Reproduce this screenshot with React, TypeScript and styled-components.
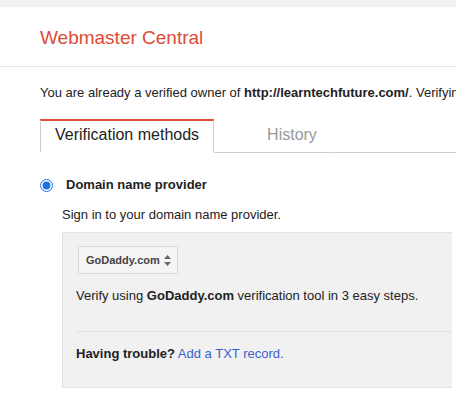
import styled, { createGlobalStyle } from "styled-components";

const GlobalStyle = createGlobalStyle`
  body {
    margin: 0;
    background: #ffffff;
    font-family: "Liberation Sans", Arial, sans-serif;
    color: #222222;
  }
`;

export default function App() {
  return (
    <>
      <GlobalStyle />
      <Page>
        <TopBar />
        <Header>
          <Title>Webmaster Central</Title>
        </Header>
        <Content>
          <Intro>
            You are already a verified owner of <b>http://learntechfuture.com/</b>. Verifying
          </Intro>
          <Tabs>
            <Tab $active>Verification methods</Tab>
            <Tab>History</Tab>
          </Tabs>
          <MethodRow>
            <Radio type="radio" defaultChecked name="method" />
            <MethodLabel>Domain name provider</MethodLabel>
          </MethodRow>
          <Section>
            <Hint>Sign in to your domain name provider.</Hint>
            <Panel>
              <Select>
                GoDaddy.com
                <Arrows viewBox="0 0 7 11" width="7" height="11">
                  <path d="M3.5 0 L7 4 L0 4 Z" fill="#666" />
                  <path d="M0 7 L7 7 L3.5 11 Z" fill="#666" />
                </Arrows>
              </Select>
              <Steps>
                Verify using <b>GoDaddy.com</b> verification tool in 3 easy steps.
              </Steps>
              <Divider />
              <Trouble>
                <b>Having trouble?</b> <Link href="#">Add a TXT record.</Link>
              </Trouble>
            </Panel>
          </Section>
        </Content>
      </Page>
    </>
  );
}

const Page = styled.div`
  width: 456px;
  height: 396px;
  overflow: hidden;
`;

const TopBar = styled.div`
  height: 7px;
  background: #f1f1f1;
`;

const Header = styled.div`
  box-sizing: border-box;
  height: 60px;
  padding: 20px 0 0 40px;
  border-bottom: 1px solid #e5e5e5;
`;

const Title = styled.h1`
  margin: 0;
  font-size: 19px;
  line-height: 22px;
  font-weight: normal;
  color: #dd4b39;
`;

const Content = styled.div`
  padding-left: 40px;
`;

const Intro = styled.p`
  margin: 18px 0 0;
  font-size: 13px;
  line-height: 16px;
  white-space: nowrap;
`;

const Tabs = styled.div`
  display: flex;
  margin-top: 18px;
  border-bottom: 1px solid #cccccc;
`;

const Tab = styled.div<{ $active?: boolean }>`
  box-sizing: border-box;
  height: 34px;
  padding: 5px 14px 0 ${(p) => (p.$active ? "14px" : "52px")};
  margin-bottom: -1px;
  font-size: 16px;
  line-height: 18px;
  white-space: nowrap;
  color: ${(p) => (p.$active ? "#222222" : "#999999")};
  background: #ffffff;
  border-top: 2px solid ${(p) => (p.$active ? "#dd4b39" : "transparent")};
  border-left: 1px solid ${(p) => (p.$active ? "#cccccc" : "transparent")};
  border-right: 1px solid ${(p) => (p.$active ? "#cccccc" : "transparent")};
  border-bottom: 1px solid ${(p) => (p.$active ? "#ffffff" : "#cccccc")};
`;

const MethodRow = styled.label`
  display: flex;
  align-items: center;
  gap: 13px;
  margin-top: 24px;
  height: 16px;
`;

const Radio = styled.input`
  width: 13px;
  height: 13px;
  margin: 0;
  accent-color: #1a73e8;
`;

const MethodLabel = styled.span`
  font-size: 13px;
  line-height: 16px;
  font-weight: bold;
`;

const Section = styled.div`
  padding-left: 22px;
`;

const Hint = styled.p`
  margin: 14px 0 0;
  font-size: 13px;
  line-height: 16px;
`;

const Panel = styled.div`
  box-sizing: border-box;
  width: 390px;
  height: 156px;
  margin-top: 9px;
  padding-top: 13px;
  background: #f1f1f1;
  border: 1px solid #e3e3e3;
  border-right: none;
`;

const Select = styled.div`
  box-sizing: border-box;
  display: flex;
  align-items: center;
  justify-content: space-between;
  width: 100px;
  height: 28px;
  margin-left: 15px;
  padding: 0 6px 0 7px;
  font-size: 11px;
  font-weight: bold;
  color: #444444;
  background: #f4f4f4;
  border: 1px solid #dcdcdc;
  border-radius: 2px;
`;

const Arrows = styled.svg`
  display: block;
`;

const Steps = styled.p`
  margin: 14px 0 0 13px;
  font-size: 13px;
  line-height: 16px;
  white-space: nowrap;
`;

const Divider = styled.hr`
  margin: 27px 0 0 13px;
  border: none;
  border-top: 1px solid #e0e0e0;
`;

const Trouble = styled.p`
  margin: 14px 0 0 13px;
  font-size: 13px;
  line-height: 16px;
`;

const Link = styled.a`
  color: #3c5fcc;
  text-decoration: none;
`;
